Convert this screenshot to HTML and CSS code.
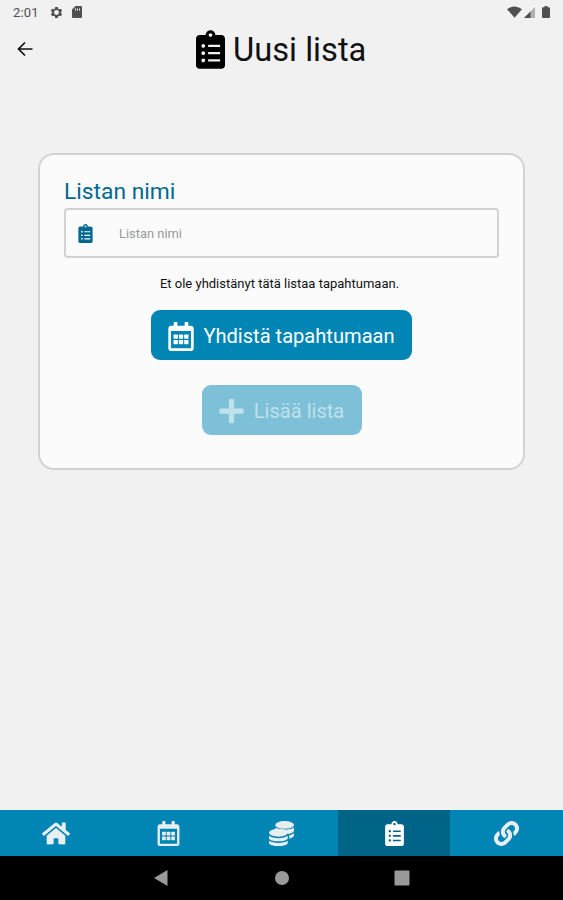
FILE: index.html
```html
<!DOCTYPE html>
<html lang="fi">
<head>
    <meta charset="utf-8" />
    <title>Uusi lista</title>
    <link rel="stylesheet" href="styles.css">
</head>
<body>

    <svg class="icon-defs" width="0" height="0">
        <symbol id="clipboard" viewBox="0 0 384 512">
            <path d="M336 64h-80c0-35.3-28.7-64-64-64s-64 28.7-64 64H48C21.5 64 0 85.5 0 112v352c0 26.5 21.5 48 48 48h288c26.5 0 48-21.5 48-48V112c0-26.5-21.5-48-48-48zM96 424c-13.3 0-24-10.7-24-24s10.7-24 24-24 24 10.7 24 24-10.7 24-24 24zm0-96c-13.3 0-24-10.7-24-24s10.7-24 24-24 24 10.7 24 24-10.7 24-24 24zm0-96c-13.3 0-24-10.7-24-24s10.7-24 24-24 24 10.7 24 24-10.7 24-24 24zm96-192c13.3 0 24 10.7 24 24s-10.7 24-24 24-24-10.7-24-24 10.7-24 24-24zm128 368c0 4.400-3.600 8-8 8H168c-4.400 0-8-3.600-8-8v-16c0-4.400 3.600-8 8-8h144c4.400 0 8 3.600 8 8v16zm0-96c0 4.400-3.600 8-8 8H168c-4.400 0-8-3.600-8-8v-16c0-4.400 3.600-8 8-8h144c4.400 0 8 3.600 8 8v16zm0-96c0 4.400-3.600 8-8 8H168c-4.400 0-8-3.600-8-8v-16c0-4.400 3.600-8 8-8h144c4.400 0 8 3.600 8 8v16z" />
        </symbol>
        <symbol id="calendar" viewBox="0 0 448 512">
            <path d="M448 112v352c0 26.500-21.500 48-48 48H48c-26.500 0-48-21.500-48-48V112c0-26.500 21.500-48 48-48h48V12c0-6.600 5.400-12 12-12h40c6.600 0 12 5.400 12 12v52h128V12c0-6.600 5.400-12 12-12h40c6.600 0 12 5.400 12 12v52h48c26.500 0 48 21.500 48 48zm-48 346V160H48v298c0 3.300 2.700 6 6 6h340c3.300 0 6-2.700 6-6z" />
            <rect x="92" y="220" width="76" height="76" rx="12" />
            <rect x="186" y="220" width="76" height="76" rx="12" />
            <rect x="280" y="220" width="76" height="76" rx="12" />
            <rect x="92" y="316" width="76" height="76" rx="12" />
            <rect x="186" y="316" width="76" height="76" rx="12" />
            <rect x="280" y="316" width="76" height="76" rx="12" />
        </symbol>
        <symbol id="plus" viewBox="0 0 448 512">
            <path d="M416 208H272V64c0-17.670-14.330-32-32-32h-32c-17.670 0-32 14.330-32 32v144H32c-17.670 0-32 14.330-32 32v32c0 17.670 14.330 32 32 32h144v144c0 17.670 14.330 32 32 32h32c17.670 0 32-14.330 32-32V304h144c17.670 0 32-14.330 32-32v-32c0-17.670-14.330-32-32-32z" />
        </symbol>
        <symbol id="home" viewBox="0 0 576 512">
            <path d="M280.370 148.260L96 300.110V464a16 16 0 0 0 16 16l112.060-.290a16 16 0 0 0 15.920-16V368a16 16 0 0 1 16-16h64a16 16 0 0 1 16 16v95.640a16 16 0 0 0 16 16.050L464 480a16 16 0 0 0 16-16V300L295.670 148.260a12.190 12.190 0 0 0-15.300 0zM571.600 251.470L488 182.560V44.050a12 12 0 0 0-12-12h-56a12 12 0 0 0-12 12v72.610L318.470 43a48 48 0 0 0-61 0L4.340 251.470a12 12 0 0 0-1.600 16.900l25.500 31A12 12 0 0 0 45.150 301l235.220-193.740a12.190 12.190 0 0 1 15.300 0L530.900 301a12 12 0 0 0 16.900-1.600l25.500-31a12 12 0 0 0-1.700-16.930z" />
        </symbol>
        <symbol id="coins" viewBox="0 0 512 512">
            <ellipse cx="320" cy="80" rx="192" ry="80" />
            <path d="M512 134v58c0 34-49 64-122 76-20-41-90-72-180-76-45-9-76-25-82-44v-14c41 29 117 42 192 42s151-13 192-42z" />
            <path d="M512 246v42c0 36-42 61-96 73v-67c39-10 72-25 96-48z" />
            <ellipse cx="192" cy="240" rx="192" ry="80" />
            <path d="M0 300c41 29 117 52 192 52s151-23 192-52v52c0 35-86 64-192 64S0 387 0 352z" />
            <path d="M0 405c41 29 117 43 192 43s151-14 192-43v43c0 35-86 64-192 64S0 483 0 448z" />
        </symbol>
        <symbol id="link" viewBox="0 0 512 512">
            <path d="M326.612 185.391c59.747 59.809 58.927 155.698.360 214.590-.110.120-.240.250-.360.370l-67.200 67.200c-59.270 59.270-155.699 59.262-214.960 0-59.270-59.260-59.270-155.700 0-214.960l37.106-37.106c9.840-9.840 26.786-3.300 27.294 10.606.648 17.722 3.826 35.527 9.690 52.721 1.986 5.822.567 12.262-3.783 16.612l-13.087 13.087c-28.026 28.026-28.905 73.660-1.155 101.960 28.024 28.579 74.086 28.749 102.325.510l67.200-67.190c28.191-28.191 28.073-73.757 0-101.830-3.701-3.694-7.429-6.564-10.341-8.569a16.037 16.037 0 0 1-6.947-12.606c-.396-10.567 3.348-21.456 11.698-29.806l21.054-21.055c5.521-5.521 14.182-6.199 20.584-1.731a152.482 152.482 0 0 1 20.522 17.197zM467.547 44.449c-59.261-59.262-155.690-59.270-214.960 0l-67.200 67.200c-.120.120-.250.250-.360.370-58.566 58.892-59.387 154.781.360 214.590a152.454 152.454 0 0 0 20.521 17.196c6.402 4.468 15.064 3.789 20.584-1.731l21.054-21.055c8.350-8.350 12.094-19.239 11.698-29.806a16.037 16.037 0 0 0-6.947-12.606c-2.912-2.005-6.640-4.875-10.341-8.569-28.073-28.073-28.191-73.639 0-101.830l67.200-67.190c28.239-28.239 74.300-28.069 102.325.510 27.750 28.300 26.872 73.934-1.155 101.960l-13.087 13.087c-4.350 4.350-5.769 10.790-3.783 16.612 5.864 17.194 9.042 34.999 9.690 52.721.509 13.906 17.454 20.446 27.294 10.606l37.106-37.106c59.271-59.259 59.271-155.699.001-214.959z" />
        </symbol>
    </svg>

    <div class="status-bar">
        <div class="status-left">
            <span class="clock">2:01</span>
            <svg class="gear" viewBox="0 0 24 24"><path fill-rule="evenodd" d="M9.500 2h5l.5 3 2 1.200 3-1.200 2.500 4.300-2.400 1.900v1.600l2.400 1.900L20 19l-3-1.200-2 1.200-.5 3h-5L9 19l-2-1.200L4 19l-2.500-4.300 2.400-1.900v-1.600L1.500 9.300 4 5l3 1.200L9 5zM12 7.500a4.500 4.500 0 1 0 0 9 4.500 4.500 0 0 0 0-9z" /></svg>
            <svg class="sd-card" viewBox="0 0 10 12"><path fill-rule="evenodd" d="M3.500 0H9a1 1 0 0 1 1 1v10a1 1 0 0 1-1 1H1a1 1 0 0 1-1-1V3.500zM3 2.500v2h1v-2zm2 0v2h1v-2zm2 0v2h1v-2z" /></svg>
        </div>
        <div class="status-right">
            <svg class="wifi" viewBox="0 0 16 12"><path d="M0 3Q8-3 16 3L8 12z" /></svg>
            <svg class="signal" viewBox="0 0 11 11"><path class="weak" d="M11 0v11H0z" /><path d="M6.500 4.500V11H0z" /></svg>
            <svg class="battery" viewBox="0 0 8 12"><path d="M2.500 0h3v1.300H7a1 1 0 0 1 1 1V11a1 1 0 0 1-1 1H1a1 1 0 0 1-1-1V2.300a1 1 0 0 1 1-1h1.500z" /></svg>
        </div>
    </div>

    <div class="header">
        <svg class="back" viewBox="0 0 16 16"><path d="M15.500 8H2M8 1.500L1.500 8 8 14.500" /></svg>
        <svg class="logo"><use href="#clipboard" /></svg>
        <h1>Uusi lista</h1>
    </div>

    <div class="content">
        <div class="card">
            <label for="listName">Listan nimi</label>
            <div class="input-box">
                <svg class="input-icon"><use href="#clipboard" /></svg>
                <input type="text" id="listName" placeholder="Listan nimi">
            </div>
            <p>Et ole yhdistänyt tätä listaa tapahtumaan.</p>
            <button class="connect-btn"><svg class="calendar-icon"><use href="#calendar" /></svg><span>Yhdistä tapahtumaan</span></button>
            <button class="add-btn" disabled><svg class="plus-icon"><use href="#plus" /></svg><span>Lisää lista</span></button>
        </div>
    </div>

    <div class="tabs">
        <div class="tab"><svg class="home-icon"><use href="#home" /></svg></div>
        <div class="tab"><svg><use href="#calendar" /></svg></div>
        <div class="tab"><svg><use href="#coins" /></svg></div>
        <div class="tab active"><svg><use href="#clipboard" /></svg></div>
        <div class="tab"><svg><use href="#link" /></svg></div>
    </div>

    <div class="system-bar">
        <svg viewBox="0 0 16 16"><path d="M13.500 0v16L0 8z" /></svg>
        <svg viewBox="0 0 16 16"><circle cx="8" cy="8" r="7" /></svg>
        <svg viewBox="0 0 16 16"><rect x=".5" y=".5" width="15" height="15" rx="1" /></svg>
    </div>

</body>
</html>
```

FILE: styles.css
```css
* {
    box-sizing: border-box;
}

body {
    margin: 0;
    height: 900px;
    display: flex;
    flex-direction: column;
    font-family: Roboto, sans-serif;
    background-color: #f1f1f1;
    color: #111;
    overflow: hidden;
}

svg {
    display: block;
    flex: none;
    fill: currentColor;
}

.icon-defs {
    display: none;
}

.status-bar {
    height: 24px;
    padding: 0 13px;
    display: flex;
    justify-content: space-between;
    align-items: center;
    color: #505050;
}

.status-left,
.status-right {
    display: flex;
    align-items: center;
}

.clock {
    width: 37px;
    font-size: 13px;
    letter-spacing: 0.2px;
}

.gear {
    width: 13px;
    height: 13px;
}

.sd-card {
    width: 10px;
    height: 12px;
    margin-left: 9px;
}

.wifi {
    width: 15px;
    height: 12px;
}

.signal {
    width: 11px;
    height: 11px;
    margin: 0 7px 0 2px;
}

.signal .weak {
    opacity: 0.4;
}

.battery {
    width: 8px;
    height: 12px;
}

.header {
    height: 50px;
    padding: 0 17px;
    display: flex;
    align-items: center;
}

.back {
    width: 16px;
    height: 16px;
    fill: none;
    stroke: #111;
    stroke-width: 1.7;
}

.logo {
    width: 29px;
    height: 39px;
    margin-left: 163px;
    color: #000;
}

h1 {
    margin: 2px 0 0 8px;
    font-size: 32.7px;
    font-weight: normal;
    white-space: nowrap;
}

.content {
    flex: 1;
    padding: 79px 38px 0;
}

.card {
    height: 317px;
    padding: 23px 24px 0;
    display: flex;
    flex-direction: column;
    align-items: center;
    background-color: #fbfbfb;
    border: 2px solid #d2d2d2;
    border-radius: 16px;
}

label {
    align-self: flex-start;
    height: 30px;
    line-height: 27px;
    font-size: 22.8px;
    color: #006990;
}

.input-box {
    width: 435px;
    height: 50px;
    padding-left: 12px;
    display: flex;
    align-items: center;
    border: 2px solid #d2d2d2;
    border-radius: 4px;
}

.input-icon {
    width: 15px;
    height: 19px;
    color: #006990;
}

input[type="text"] {
    flex: 1;
    margin-left: 26px;
    padding: 0;
    font-family: inherit;
    font-size: 12.9px;
    border: none;
    background: none;
    outline: none;
}

    input::placeholder {
        color: #999;
    }

p {
    margin: 18px 0;
    line-height: 16px;
    font-size: 13px;
    white-space: nowrap;
    position: relative;
    left: -2px;
}

button {
    height: 50px;
    padding: 2px 0 0;
    display: flex;
    align-items: center;
    justify-content: center;
    font-family: inherit;
    font-size: 20.1px;
    color: #fff;
    background-color: #0085b5;
    border: none;
    border-radius: 9px;
    white-space: nowrap;
}

.connect-btn {
    width: 261px;
    gap: 9px;
}

.add-btn {
    width: 160px;
    margin-top: 25px;
    gap: 10px;
    color: #bfe1ec;
    background-color: #7dc0d8;
}

.calendar-icon {
    width: 26px;
    height: 29px;
}

.plus-icon {
    width: 25px;
    height: 28px;
}

.tabs {
    height: 46px;
    display: flex;
    color: #e9eef0;
    background-color: #0085b5;
}

.tab {
    flex: 1;
    display: flex;
    align-items: center;
    justify-content: center;
}

    .tab svg {
        width: 25px;
        height: 25px;
    }

    .tab .home-icon {
        width: 28px;
    }

.active {
    color: #fff;
    background-color: #006488;
}

.system-bar {
    height: 44px;
    display: flex;
    align-items: center;
    justify-content: center;
    gap: 104px;
    color: #999;
    background-color: #000;
}

    .system-bar svg {
        width: 16px;
        height: 16px;
    }
```
